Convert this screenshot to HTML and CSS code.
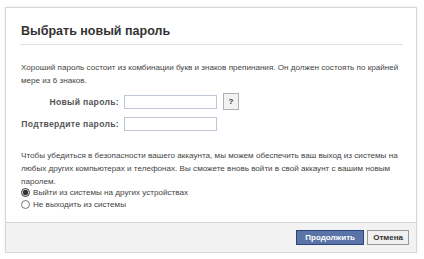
FILE: index.html
```html
<!DOCTYPE html>
<html lang="ru">
<head>
    <meta charset="UTF-8">
    <title>Выбрать новый пароль</title>
    <link rel="stylesheet" href="styles.css">
</head>
<body>
    <div class="dialog">
        <h2 class="dialog-title">Выбрать новый пароль</h2>
        <div class="dialog-body">
            <p class="note">Хороший пароль состоит из комбинации букв и знаков препинания. Он должен состоять по крайней мере из 6 знаков.</p>
            <div class="field-row">
                <label class="field-label">Новый пароль:</label>
                <input type="password" class="field-input">
                <button class="help-btn">?</button>
            </div>
            <div class="field-row">
                <label class="field-label">Подтвердите пароль:</label>
                <input type="password" class="field-input">
            </div>
            <p class="note">Чтобы убедиться в безопасности вашего аккаунта, мы можем обеспечить ваш выход из системы на любых других компьютерах и телефонах. Вы сможете вновь войти в свой аккаунт с вашим новым паролем.</p>
            <label class="radio-row"><input type="radio" name="logout" checked> Выйти из системы на других устройствах</label>
            <label class="radio-row"><input type="radio" name="logout"> Не выходить из системы</label>
        </div>
        <div class="dialog-footer">
            <button class="btn btn-primary">Продолжить</button>
            <button class="btn">Отмена</button>
        </div>
    </div>
</body>
</html>
```

FILE: styles.css
```css
body {
    margin: 0;
    padding: 7px 0 0 5px;
    background: #ffffff;
    font-family: "Liberation Sans", Tahoma, sans-serif;
    color: #333;
}
.dialog {
    width: 410px;
    height: 244px;
    border: 1px solid #d6d6d6;
    box-shadow: 0 0 3px rgba(0, 0, 0, 0.08);
    display: flex;
    flex-direction: column;
}
.dialog-title {
    margin: 0 13px 0 14px;
    padding: 17px 0 7px 1px;
    font-size: 12.5px;
    font-weight: bold;
    color: #333;
    border-bottom: 1px solid #e2e2e2;
    line-height: 12px;
}
.dialog-body {
    flex: 1;
    padding: 16px 14px 0 15px;
}
.note {
    margin: 0 0 7px;
    font-size: 8.1px;
    line-height: 13px;
    color: #444;
}
.field-row {
    display: flex;
    align-items: center;
    height: 15px;
    margin-bottom: 7px;
}
.field-label {
    width: 98px;
    text-align: right;
    white-space: nowrap;
    font-size: 8.6px;
    font-weight: bold;
    letter-spacing: 0.3px;
    color: #555;
    margin-right: 5px;
}
.field-input {
    width: 91px;
    height: 12px;
    padding: 0;
    border: 1px solid #bdc7d8;
    margin: 0;
}
.help-btn {
    margin-left: 6px;
    width: 16px;
    height: 17px;
    padding: 0;
    font-size: 8px;
    font-weight: bold;
    font-family: inherit;
    color: #333;
    background: #f2f2f2;
    border: 1px solid #b0b0b0;
}
.field-row + .note {
    margin-top: 18px;
    margin-bottom: -2px;
}
.radio-row {
    display: flex;
    align-items: center;
    font-size: 8.1px;
    color: #444;
    height: 12px;
}
.radio-row input {
    width: 9px;
    height: 9px;
    margin: 0 3px 0 0;
    accent-color: #333;
}
.dialog-footer {
    height: 29px;
    background: #f2f2f2;
    border-top: 1px solid #d6d6d6;
    display: flex;
    justify-content: flex-end;
    align-items: center;
    gap: 3px;
    padding-right: 7px;
}
.btn {
    height: 15px;
    padding: 0 5px;
    font-family: inherit;
    font-size: 8px;
    font-weight: bold;
    color: #333;
    background: #f0f0f0;
    border: 1px solid #999;
}
.btn-primary {
    width: 68px;
    background: #5b74a8;
    border-color: #29447e;
    color: #fff;
}
```
